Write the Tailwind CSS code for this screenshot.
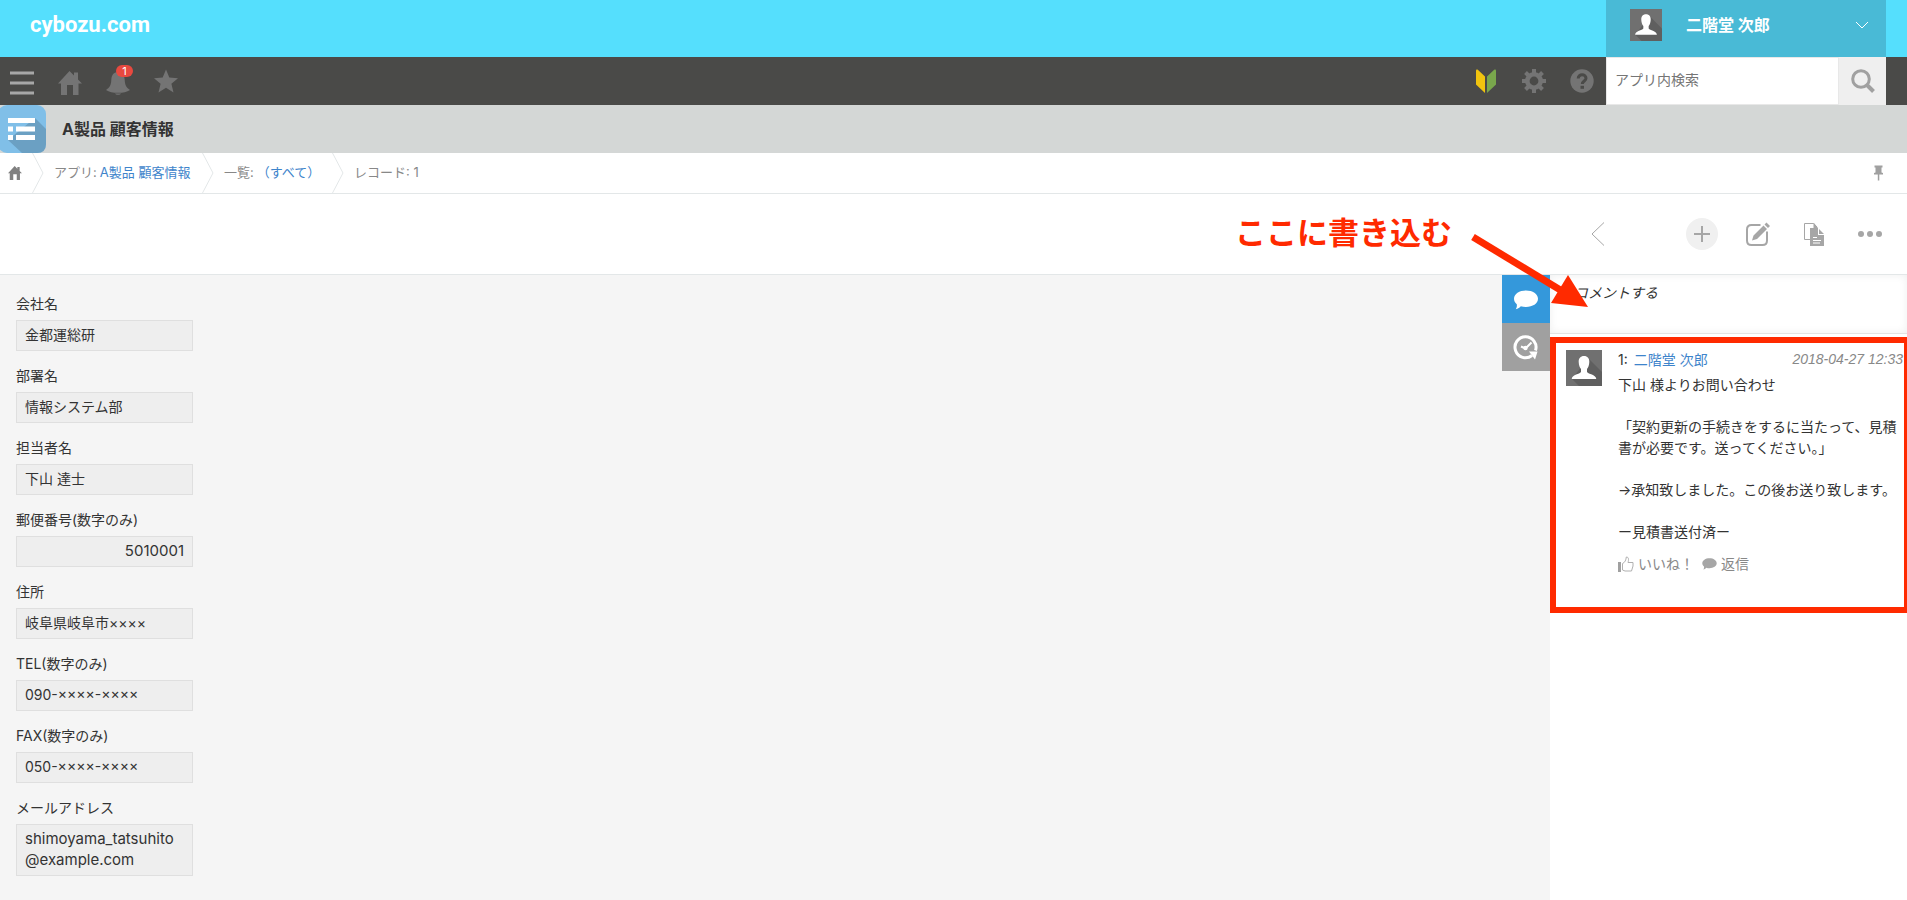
<!DOCTYPE html>
<html lang="ja">
<head>
<meta charset="utf-8">
<meta name="viewport" content="width=device-width, initial-scale=1">
<title>A製品 顧客情報</title>
<script src="https://cdn.jsdelivr.net/npm/@tailwindcss/browser@4"></script>
</head>
<body class="relative flex min-h-screen flex-col overflow-x-hidden bg-white font-[Inter,'Noto_Sans_CJK_JP',sans-serif] text-sm leading-[21px] text-[#333333]">

<svg class="hidden" aria-hidden="true">
  <symbol id="home" viewBox="0 0 24 24"><path d="M11.500 0 L16 4.500 V1.500 H20 V8.500 L24 12.500 H20.500 V24 H15 V14 H9 V24 H3 V12.500 H0 Z"/></symbol>
  <symbol id="person" viewBox="0 0 36 36">
    <rect width="36" height="36" fill="#707070"/>
    <path d="M22 8 L36 22 V36 H13 L6 29 Z" fill="#5f5f5f"/>
    <path d="M18 6 C21.500 6 23.500 8.500 23.300 12 C23.200 15.500 22.200 17.500 21 19 V22 C22.500 24.500 29.500 24 30.300 29 H5.700 C6.500 24 13.500 24.500 15 22 V19 C13.800 17.500 12.800 15.500 12.700 12 C12.500 8.500 14.500 6 18 6 Z" fill="#fff"/>
  </symbol>
  <symbol id="bubble" viewBox="0 0 24 20"><path d="M12 0.500 C18.600 0.500 24 4 24 8.800 C24 13.600 18.600 17 12 17 C10 17 8.300 16.800 6.800 16.200 C5.800 17.600 4 18.700 1.800 19.200 C2.900 17.700 3 16 2.800 14.300 C1 12.800 0 11 0 8.800 C0 4 5.400 0.500 12 0.500 Z"/></symbol>
</svg>

<header class="flex h-[57px] justify-between bg-[#55dffd] pr-[21px]">
  <a href="#" class="mt-[9px] ml-[30px] font-[Roboto,sans-serif] text-[22px] leading-8 font-bold text-white">cybozu.com</a>
  <button type="button" class="flex w-[280px] items-start bg-[#49bad6] pt-[9px] pl-6 text-white">
    <svg class="size-8"><use href="#person"/></svg>
    <span class="ml-6 text-base leading-8 font-bold">二階堂 次郎</span>
    <svg class="mt-3 mr-[18px] ml-auto h-2 w-3" viewBox="0 0 12 8" fill="none" stroke="#fff"><path d="M0 1 L6 7 L12 1"/></svg>
  </button>
</header>

<nav class="flex h-12 bg-[#4a4a48] pr-[21px] text-[#747474]">
  <button type="button" aria-label="メニュー" class="flex w-[46px] items-center pt-1 pl-[10px]">
    <svg class="size-6" fill="#a8a8a8"><path d="M0 0.500h24v3h-24z M0 10.500h24v3h-24z M0 20.500h24v3h-24z"/></svg>
  </button>
  <button type="button" aria-label="ポータル" class="flex w-12 items-center justify-center pt-1"><svg class="size-6" fill="currentColor"><use href="#home"/></svg></button>
  <button type="button" aria-label="通知" class="relative flex w-12 items-center justify-center pt-1">
    <svg class="size-6" viewBox="0 0 24 24" fill="currentColor"><path d="M12 1 C17 1 18.500 5 18.700 9 C19 14.500 20.500 16.500 24 19 C21 21 17 21.800 12 21.800 C7 21.800 3 21 0 19 C3.500 16.500 5 14.500 5.300 9 C5.500 5 7 1 12 1 Z M9 22.500 H15 C14.500 24.300 9.500 24.300 9 22.500 Z"/></svg>
    <span class="absolute top-2 left-[22px] h-3 w-[17px] rounded-full bg-[#e8493f] text-center text-[11px] leading-3 text-white">1</span>
  </button>
  <button type="button" aria-label="お気に入り" class="flex w-12 items-center justify-center"><svg class="size-6" viewBox="0 0 24 24" fill="currentColor"><path d="M12 0.500 L15.300 8.500 L24 9.200 L17.400 14.700 L19.500 23.500 L12 18.800 L4.500 23.500 L6.600 14.700 L0 9.200 L8.700 8.500 Z"/></svg></button>

  <div class="ml-auto flex">
    <button type="button" aria-label="はじめに" class="flex w-12 items-center justify-center"><svg class="size-6" viewBox="0 0 24 24"><path d="M2 1.500 Q2 0 3.500 0.500 L11 7.500 V24 L2 15.500 Z" fill="#f1c40f"/><path d="M22 1.500 Q22 0 20.500 0.500 L13 7.500 V24 L22 15.500 Z" fill="#79a74c"/></svg></button>
    <button type="button" aria-label="設定" class="flex w-12 items-center justify-center">
      <svg class="size-6" viewBox="0 0 24 24" fill="none" stroke="currentColor"><circle cx="12" cy="12" r="6.700" stroke-width="4.600"/><path stroke-width="4" d="M12 0v4 M12 20v4 M0 12h4 M20 12h4 M3.500 3.500l3 3 M17.500 17.500l3 3 M3.500 20.500l3-3 M17.500 6.500l3-3"/></svg>
    </button>
    <button type="button" aria-label="ヘルプ" class="flex w-12 items-center justify-center"><svg class="size-6" viewBox="0 0 24 24"><circle cx="12" cy="12" r="11.700" fill="currentColor"/><path d="M8.200 9.500 C8.200 4.500 16 4.800 16 9.300 C16 12 12.300 12 12.300 15" fill="none" stroke="#4a4a48" stroke-width="3"/><path d="M10.500 16.800h3.500v3h-3.500z" fill="#4a4a48"/></svg></button>
    <form class="flex" onsubmit="return false">
      <input type="search" aria-label="アプリ内検索" placeholder="アプリ内検索" class="w-[233px] border border-[#e8e8e8] bg-white px-2 pb-0.5 text-sm text-[#333333] outline-none placeholder:text-[#757575]">
      <button type="submit" aria-label="検索" class="flex w-[47px] items-center justify-center bg-[#efefef]"><svg class="size-6" viewBox="0 0 24 24" fill="none" stroke="#a0a0a0"><circle cx="10" cy="10" r="8.300" stroke-width="3"/><path d="M15.500 15.500 L22.500 22.500" stroke-width="4"/></svg></button>
    </form>
  </div>
</nav>

<div class="flex h-12 items-center gap-4 bg-[#d4d7d6]">
  <svg class="h-12 w-[46px]" viewBox="0 0 46 48">
    <rect x="-2" width="48" height="48" rx="9" fill="#80bfe8"/>
    <path d="M35 13 L46 24 V39 Q46 48 37 48 H22 L8 35 Z" fill="#6ba0c3"/>
    <path d="M8 13h27v5h-27z M8 21.500h5v5h-5z M16 21.500h19v5h-19z M8 30h5v5h-5z M16 30h19v5h-19z" fill="#fff"/>
  </svg>
  <h1 class="text-base leading-6 font-bold">A製品 顧客情報</h1>
</div>

<div class="flex h-[41px] border-b border-[#e3e7e8] text-[13px] text-[#888888]">
  <a href="#" aria-label="ホーム" class="flex w-8 items-center pl-2"><svg class="size-[14px]" fill="#808080"><use href="#home"/></svg></a>
  <svg class="h-10 w-3" viewBox="0 0 12 40" fill="none" stroke="#e3e7e8"><path d="M0.500 0 L11 20 L0.500 40"/></svg>
  <div class="flex w-[158px] items-center gap-[3px] pb-0.5 pl-[10px] whitespace-nowrap">アプリ: <a href="#" class="text-[#3e84cb]">A製品 顧客情報</a></div>
  <svg class="h-10 w-3" viewBox="0 0 12 40" fill="none" stroke="#e3e7e8"><path d="M0.500 0 L11 20 L0.500 40"/></svg>
  <div class="flex w-[118px] items-center gap-[3px] pb-0.5 pl-[10px] whitespace-nowrap">一覧: <a href="#" class="text-[#3e84cb]">（すべて）</a></div>
  <svg class="h-10 w-3" viewBox="0 0 12 40" fill="none" stroke="#e3e7e8"><path d="M0.500 0 L11 20 L0.500 40"/></svg>
  <div class="flex items-center pb-0.5 pl-[10px] whitespace-nowrap">レコード: 1</div>
  <button type="button" aria-label="固定" class="mr-6 ml-auto"><svg class="h-4 w-[9px]" viewBox="0 0 9 16" fill="#a0a0a0"><path d="M0.500 0.500h8v2h-1v5l1.500 0.500v1.500h-3.700v6h-1.500v-6h-3.800v-1.500l1.500-0.500v-5h-1z"/></svg></button>
</div>

<div class="flex h-[81px] items-center justify-end border-b border-[#e3e7e8] pr-[9px] text-[#a6a6a6]">
  <button type="button" aria-label="前のレコード" class="mr-12 flex w-14 justify-center"><svg class="h-6 w-[14px]" viewBox="0 0 14 24" fill="none" stroke="currentColor"><path d="M13 0.500 L1 12 L13 23.500"/></svg></button>
  <button type="button" aria-label="レコードを追加" class="flex w-14 justify-center"><svg class="size-8" viewBox="0 0 32 32"><circle cx="16" cy="16" r="16" fill="#f0f0f0"/><path d="M16 8v16 M8 16h16" stroke="currentColor" stroke-width="2"/></svg></button>
  <button type="button" aria-label="レコードを編集" class="flex w-14 justify-center"><svg class="size-6" viewBox="0 0 24 24"><path d="M14.500 3 H5.500 Q1 3 1 7.500 V18.500 Q1 23 5.500 23 H16.500 Q21 23 21 18.500 V9.500" fill="none" stroke="currentColor" stroke-width="2"/><path d="M6 18.500 L7.500 13.500 L17.500 3.500 L21 7 L11 17 Z M18.500 2.500 L20.500 0.500 L24 4 L22 6 Z" fill="currentColor"/></svg></button>
  <button type="button" aria-label="レコードを再利用" class="flex w-14 justify-center"><svg class="size-6" viewBox="0 0 24 24"><path d="M8 17.500 H2.500 V1.500 H11.500 L15 5" fill="none" stroke="currentColor"/><path d="M11.500 1 V6 H8 V24 H22 V13 H16 V6 L12 1 Z M17 7 L22 12 H17 Z" fill="currentColor"/><path d="M11 15.500h4 M11 18.500h8 M11 21h7" stroke="#fff"/></svg></button>
  <button type="button" aria-label="その他" class="flex w-14 justify-center"><svg class="h-6 w-6" viewBox="0 0 24 24" fill="currentColor"><circle cx="3" cy="12" r="3"/><circle cx="12" cy="12" r="3"/><circle cx="21" cy="12" r="3"/></svg></button>
</div>

<main class="flex flex-1 bg-[#f5f5f5]">
  <dl class="flex w-[209px] flex-col gap-[14px] px-4 pt-[18px] pb-6">
    <div class="flex flex-col gap-1.5"><dt>会社名</dt><dd class="border border-[#dfdfdf] bg-[#eeeeee] px-2 pt-[3px] pb-[5px]">金都運総研</dd></div>
    <div class="flex flex-col gap-1.5"><dt>部署名</dt><dd class="border border-[#dfdfdf] bg-[#eeeeee] px-2 pt-[3px] pb-[5px]">情報システム部</dd></div>
    <div class="flex flex-col gap-1.5"><dt>担当者名</dt><dd class="border border-[#dfdfdf] bg-[#eeeeee] px-2 pt-[3px] pb-[5px]">下山 達士</dd></div>
    <div class="flex flex-col gap-1.5"><dt>郵便番号(数字のみ)</dt><dd class="border border-[#dfdfdf] bg-[#eeeeee] px-2 pt-[3px] pb-[5px] text-right text-[15px] leading-[21px]">5010001</dd></div>
    <div class="flex flex-col gap-1.5"><dt>住所</dt><dd class="border border-[#dfdfdf] bg-[#eeeeee] px-2 pt-[3px] pb-[5px]">岐阜県岐阜市××××</dd></div>
    <div class="flex flex-col gap-1.5"><dt>TEL(数字のみ)</dt><dd class="border border-[#dfdfdf] bg-[#eeeeee] px-2 pt-[3px] pb-[5px]">090-××××-××××</dd></div>
    <div class="flex flex-col gap-1.5"><dt>FAX(数字のみ)</dt><dd class="border border-[#dfdfdf] bg-[#eeeeee] px-2 pt-[3px] pb-[5px]">050-××××-××××</dd></div>
    <div class="flex flex-col gap-1.5"><dt>メールアドレス</dt><dd class="border border-[#dfdfdf] bg-[#eeeeee] px-2 pt-[3px] pb-[5px] text-[15px] leading-[21px]">shimoyama_tatsuhito<br>@example.com</dd></div>
  </dl>

  <div class="ml-auto flex w-12 flex-col">
    <button type="button" aria-label="コメント" class="flex h-12 items-center justify-center bg-[#3498db] pt-0.5"><svg class="h-5 w-6" fill="#fff"><use href="#bubble"/></svg></button>
    <button type="button" aria-label="変更履歴" class="flex h-12 items-center justify-center bg-[#a0a0a0]"><svg class="size-[26px]" viewBox="0 0 26 26"><path d="M19 21.500 A10.500 10.500 0 1 1 22.500 16.500" fill="none" stroke="#fff" stroke-width="3"/><path d="M16 17.500 H24.500 L22 25.500 Z" fill="#fff"/><path d="M8 12.500 L12.500 14.500 L18.500 8.500" fill="none" stroke="#fff" stroke-width="2"/><circle cx="12.500" cy="14" r="2.200" fill="#fff"/></svg></button>
  </div>

  <aside class="w-[357px] bg-white">
    <input type="text" aria-label="コメントする" placeholder="コメントする" class="block h-[59px] w-full border-b border-[#e3e3e3] px-6 pb-6 text-sm italic shadow-[inset_0_0_8px_#eeeeee] outline-none placeholder:text-[#333333]">
    <article class="mt-[3px] flex h-[276px] gap-4 border-[6px] border-r-[3px] border-[#ff2a00] pt-1.5 pl-[10px]">
      <svg class="mt-px size-9 shrink-0"><use href="#person"/></svg>
      <div class="flex-1">
        <div class="flex justify-between pr-px">
          <span class="flex gap-1.5">1: <a href="#" class="text-[#3e84cb]">二階堂 次郎</a></span>
          <time class="font-['Liberation_Sans',sans-serif] text-[#888888] italic">2018-04-27 12:33</time>
        </div>
        <p class="mt-1 pr-1">下山 様よりお問い合わせ<br><br>「契約更新の手続きをするに当たって、見積<br>書が必要です。送ってください。」<br><br>→承知致しました。この後お送り致します。<br><br>ー見積書送付済ー</p>
        <div class="mt-[11px] flex items-center gap-2 text-[#888888]">
          <button type="button" class="flex items-center gap-1"><svg class="size-4" viewBox="0 0 16 16"><path d="M0 6h3v10h-3z" fill="#a0a0a0"/><path d="M4.500 7.500 C7 6.500 8 4 8.300 1 C11 1 10.800 4 10 6.500 H15 V10 L13.500 15 H7 L4.500 14 Z" fill="none" stroke="#b0b0b0"/></svg>いいね！</button>
          <button type="button" class="flex items-center gap-1"><svg class="h-3 w-[15px]" fill="#a6a6a6"><use href="#bubble"/></svg>返信</button>
        </div>
      </div>
    </article>
  </aside>
</main>

<!-- Callout laid over the page -->
<div class="pointer-events-none absolute top-[213px] right-[318px] flex text-[#ff2a00]">
  <p class="mr-[18px] text-[31px] leading-10 font-bold">ここに書き込む</p>
  <svg class="mt-5 h-[74px] w-[119px]" viewBox="0 0 119 74"><path d="M3 4 L92 58" stroke="currentColor" stroke-width="7"/><path d="M98 42 L118 74 L81 70 Z" fill="currentColor"/></svg>
</div>
</body>
</html>
